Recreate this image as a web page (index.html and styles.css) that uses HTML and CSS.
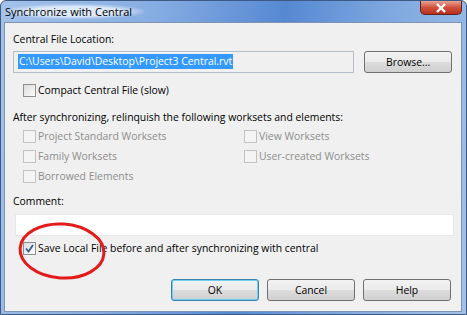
FILE: index.html
```html
<!DOCTYPE html>
<html lang="en">
<head>
  <meta charset="UTF-8">
  <title>Synchronize with Central</title>
  <link rel="stylesheet" href="styles.css">
</head>
<body>
  <div class="window">
    <div class="titlebar">
      <span class="title">Synchronize with Central</span>
      <button class="close">
        <svg width="12" height="10" viewBox="0 0 12 10"><path d="M2 1 L10 9 M10 1 L2 9" stroke="#fff" stroke-width="2.4"/></svg>
      </button>
    </div>

    <div class="client">
      <div class="label">Central File Location:</div>
      <div class="file-row">
        <div class="field"><span class="sel">C:\Users\David\Desktop\Project3 Central.rvt</span></div>
        <button class="btn">Browse...</button>
      </div>

      <label class="check compact"><span class="box"></span>Compact Central File (slow)</label>

      <div class="label after">After synchronizing, relinquish the following worksets and elements:</div>
      <div class="worksets">
        <label class="check disabled"><span class="box"></span>Project Standard Worksets</label>
        <label class="check disabled"><span class="box"></span>View Worksets</label>
        <label class="check disabled"><span class="box"></span>Family Worksets</label>
        <label class="check disabled"><span class="box"></span>User-created Worksets</label>
        <label class="check disabled"><span class="box"></span>Borrowed Elements</label>
      </div>

      <div class="label comment-label">Comment:</div>
      <div class="comment"></div>

      <label class="check save">
        <span class="box checked">
          <svg width="9" height="9" viewBox="0 0 9 9"><path d="M1 4.5 L3.5 7.5 L8 1" fill="none" stroke="#3b5a8c" stroke-width="1.8"/></svg>
        </span>Save Local File before and after synchronizing with central</label>

      <div class="buttons">
        <button class="btn default">OK</button>
        <button class="btn">Cancel</button>
        <button class="btn">Help</button>
      </div>

      <svg class="circle" width="92" height="60" viewBox="0 0 92 60">
        <ellipse cx="46" cy="30" rx="42" ry="27" fill="none" stroke="#e31b1b" stroke-width="3" transform="rotate(4 46 30)"/>
      </svg>
    </div>
  </div>
</body>
</html>
```

FILE: styles.css
```css
* {
  margin: 0;
  padding: 0;
  box-sizing: border-box;
}

html, body {
  width: 467px;
  height: 315px;
  overflow: hidden;
}

body {
  font-family: "Open Sans", "Liberation Sans", sans-serif;
  font-size: 10.4px;
  color: #000;
}

.window {
  width: 467px;
  height: 315px;
  display: flex;
  flex-direction: column;
  background: linear-gradient(100deg, #a3c2ea 0%, #86ade2 30%, #5688d2 55%, #7ea8df 75%, #a3c2e9 100%);
  border: 1px solid #3e5a83;
  border-radius: 6px 6px 0 0;
  padding: 0 4px 2px 3px;
}

.titlebar {
  height: 21px;
  display: flex;
  align-items: flex-start;
  justify-content: space-between;
}

.title {
  margin-top: 3px;
  padding: 0 12px 0 1px;
  font-size: 11px;
  background: radial-gradient(ellipse at center, rgba(225,236,250,0.95) 45%, rgba(225,236,250,0) 75%);
}

.close {
  width: 42px;
  height: 14px;
  border: 1px solid #5a2520;
  border-top: none;
  border-radius: 0 0 5px 5px;
  background: linear-gradient(#e8a596, #d1503c 50%, #b8301d);
  display: flex;
  align-items: center;
  justify-content: center;
}

.client {
  position: relative;
  flex: 1;
  background: #f0f0f0;
  border: 1px solid #7f93b3;
  padding: 8px 9px 0 8px;
}

.label {
  height: 16px;
  line-height: 16px;
}

.file-row {
  display: flex;
  align-items: center;
  gap: 10px;
  margin-top: 4px;
}

.field {
  width: 342px;
  height: 22px;
  border: 1px solid #b5bfcc;
  background: #f0f0f0;
  padding: 2px 4px;
  line-height: 15px;
}

.sel {
  display: inline-block;
  background: #3399ff;
  color: #fff;
  padding: 0 1px;
  height: 15px;
}

.btn {
  width: 88px;
  height: 22px;
  font: inherit;
  border: 1px solid #707070;
  border-radius: 3px;
  background: linear-gradient(#f2f2f2 0%, #ebebeb 48%, #dddddd 52%, #cfcfcf 100%);
  color: #000;
}

.check {
  display: flex;
  align-items: center;
  height: 20px;
  gap: 2px;
}

.box {
  width: 13px;
  height: 13px;
  border: 1px solid #8f8f8f;
  background: linear-gradient(135deg, #dcdcdc, #fbfbfb);
  display: flex;
  align-items: center;
  justify-content: center;
}

.compact {
  margin: 7px 0 0 10px;
}

.after {
  margin-top: 9px;
}

.worksets {
  display: grid;
  grid-template-columns: 221px auto;
  margin: 1px 0 0 10px;
}

.disabled {
  color: #8d8d8d;
}

.disabled .box {
  border-color: #c2c2c2;
  background: #f4f4f4;
}

.comment-label {
  margin-top: 7px;
}

.comment {
  margin: 5px 0 0 2px;
  width: 439px;
  height: 22px;
  background: #fff;
  border: 1px solid #e8e8e8;
}

.save {
  margin: 2px 0 0 10px;
}

.box.checked {
  border-color: #8e8f8f;
  background: linear-gradient(135deg, #d8dde3, #ffffff);
}

.buttons {
  display: flex;
  justify-content: flex-end;
  gap: 8px;
  margin: 21px 1px 0 0;
}

.btn.default {
  border-color: #3c7fb1;
  box-shadow: inset 0 0 0 1px #6fd0f4;
}

.circle {
  position: absolute;
  left: 11px;
  top: 198px;
}
```
